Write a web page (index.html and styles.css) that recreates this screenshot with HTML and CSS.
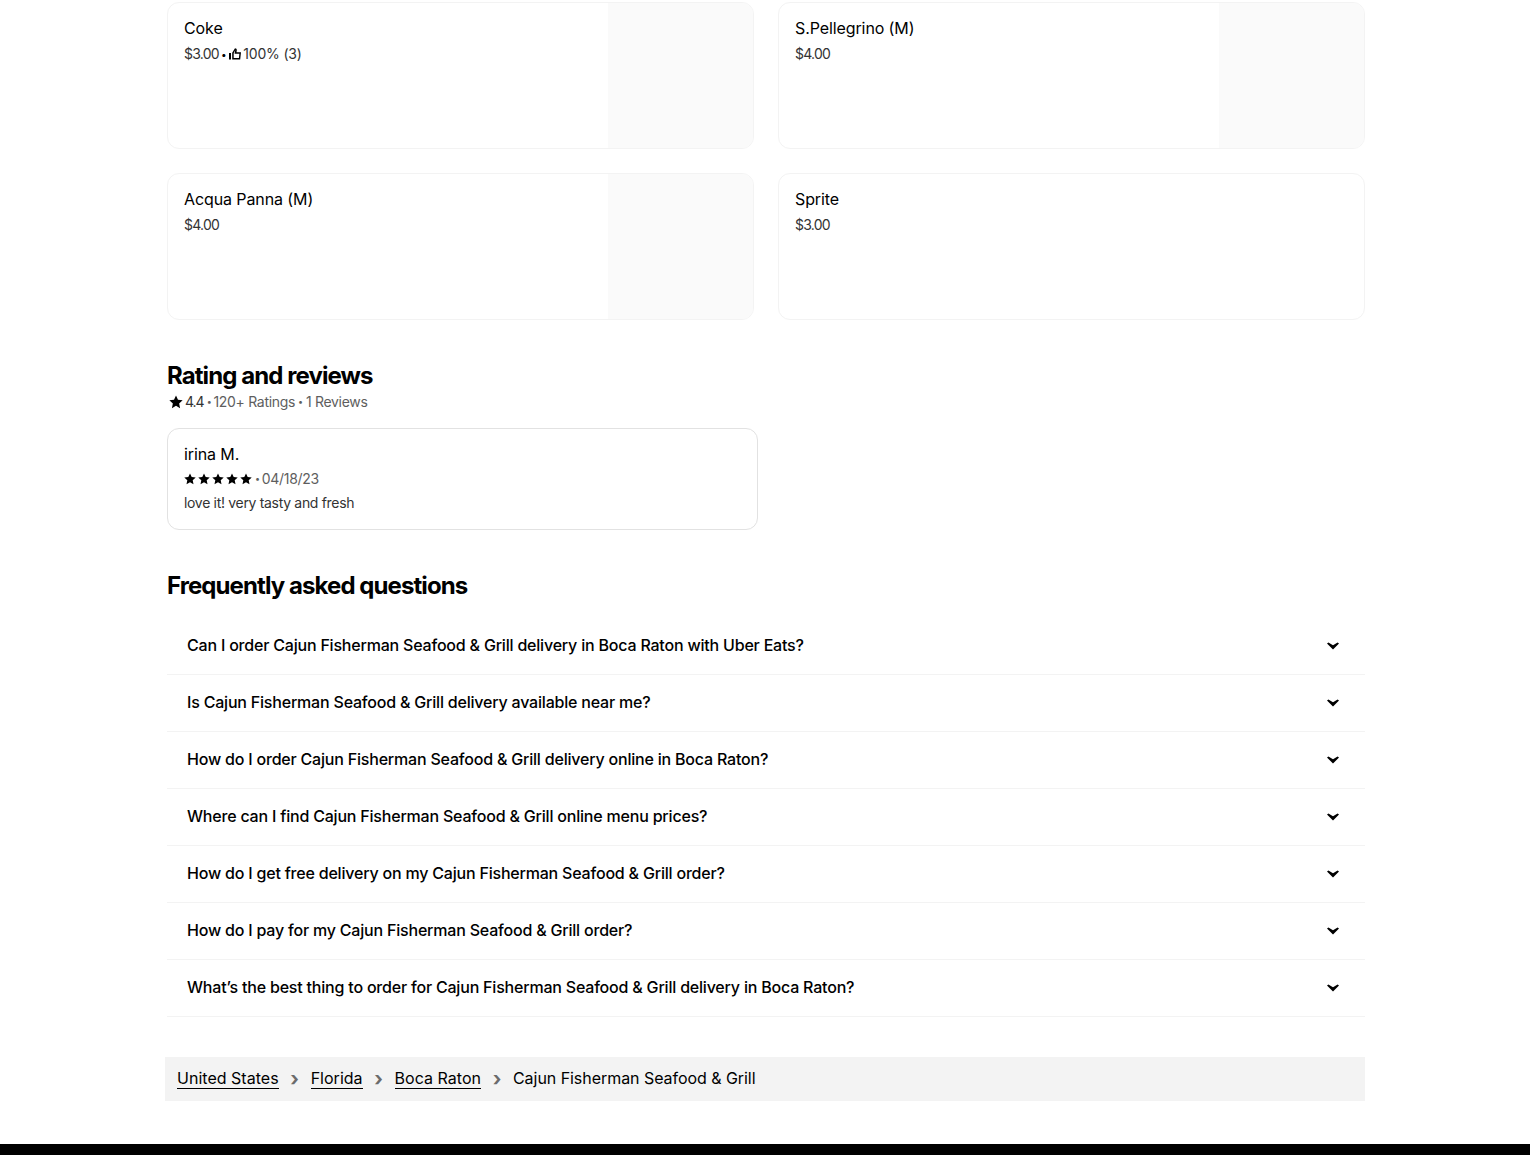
FILE: index.html
```html
<!DOCTYPE html>
<html lang="en">
<head>
<meta charset="utf-8">
<title>Cajun Fisherman Seafood &amp; Grill</title>
<link rel="stylesheet" href="styles.css">
</head>
<body>
<main class="page">
  <section class="items">
    <article class="item">
      <div class="item-text">
        <div class="item-name">Coke</div>
        <div class="item-meta"><span class="price">$3.00</span><span class="bullet">•</span><svg class="thumb" viewBox="0 0 12 12" width="12" height="12"><path d="M0 5h2v6.5H0zM3.2 11.5V4.8L6 .2c1.2 0 2 .8 1.8 2L7.5 4.2H12l-.8 7.3zM4.7 10h5.2l.5-4.3H5.6l.7-3.6L4.7 5.2z" fill="#000" fill-rule="evenodd"/></svg><span class="rating-text">100% (3)</span></div>
      </div>
      <div class="item-photo"></div>
    </article>
    <article class="item">
      <div class="item-text">
        <div class="item-name">S.Pellegrino (M)</div>
        <div class="item-meta"><span class="price">$4.00</span></div>
      </div>
      <div class="item-photo"></div>
    </article>
    <article class="item">
      <div class="item-text">
        <div class="item-name">Acqua Panna (M)</div>
        <div class="item-meta"><span class="price">$4.00</span></div>
      </div>
      <div class="item-photo"></div>
    </article>
    <article class="item">
      <div class="item-text">
        <div class="item-name">Sprite</div>
        <div class="item-meta"><span class="price">$3.00</span></div>
      </div>
    </article>
  </section>

  <section class="reviews">
    <h2 class="heading">Rating and reviews</h2>
    <div class="summary">
      <svg class="star" viewBox="0 0 12 12" width="14" height="14"><path d="M6 .4l1.7 3.7 4 .5-3 2.7.8 4L6 9.3l-3.5 2 .8-4-3-2.7 4-.5z" fill="#000"/></svg>
      <span class="score">4.4</span><span class="dot dot-score">•</span><span>120+ Ratings</span><span class="dot">•</span><span>1 Reviews</span>
    </div>
    <article class="review">
      <div class="review-name">irina M.</div>
      <div class="review-meta">
        <span class="stars">
          <svg class="star-sm" viewBox="0 0 12 12" width="12" height="12"><path d="M6 .4l1.7 3.7 4 .5-3 2.7.8 4L6 9.3l-3.5 2 .8-4-3-2.7 4-.5z" fill="#000"/></svg>
          <svg class="star-sm" viewBox="0 0 12 12" width="12" height="12"><path d="M6 .4l1.7 3.7 4 .5-3 2.7.8 4L6 9.3l-3.5 2 .8-4-3-2.7 4-.5z" fill="#000"/></svg>
          <svg class="star-sm" viewBox="0 0 12 12" width="12" height="12"><path d="M6 .4l1.7 3.7 4 .5-3 2.7.8 4L6 9.3l-3.5 2 .8-4-3-2.7 4-.5z" fill="#000"/></svg>
          <svg class="star-sm" viewBox="0 0 12 12" width="12" height="12"><path d="M6 .4l1.7 3.7 4 .5-3 2.7.8 4L6 9.3l-3.5 2 .8-4-3-2.7 4-.5z" fill="#000"/></svg>
          <svg class="star-sm" viewBox="0 0 12 12" width="12" height="12"><path d="M6 .4l1.7 3.7 4 .5-3 2.7.8 4L6 9.3l-3.5 2 .8-4-3-2.7 4-.5z" fill="#000"/></svg>
        </span>
        <span class="dot dot-tight">•</span><span>04/18/23</span>
      </div>
      <div class="review-body">love it! very tasty and fresh</div>
    </article>
  </section>

  <section class="faq">
    <h2 class="heading">Frequently asked questions</h2>
    <ul class="faq-list">
      <li class="faq-row"><span>Can I order Cajun Fisherman Seafood &amp; Grill delivery in Boca Raton with Uber Eats?</span><svg class="chev" viewBox="0 0 12 8" width="12" height="8"><path d="M0 1.6L1.4 .4 6 3.2 10.6 .4 12 1.6 6 7.4z" fill="#000"/></svg></li>
      <li class="faq-row"><span>Is Cajun Fisherman Seafood &amp; Grill delivery available near me?</span><svg class="chev" viewBox="0 0 12 8" width="12" height="8"><path d="M0 1.6L1.4 .4 6 3.2 10.6 .4 12 1.6 6 7.4z" fill="#000"/></svg></li>
      <li class="faq-row"><span>How do I order Cajun Fisherman Seafood &amp; Grill delivery online in Boca Raton?</span><svg class="chev" viewBox="0 0 12 8" width="12" height="8"><path d="M0 1.6L1.4 .4 6 3.2 10.6 .4 12 1.6 6 7.4z" fill="#000"/></svg></li>
      <li class="faq-row"><span>Where can I find Cajun Fisherman Seafood &amp; Grill online menu prices?</span><svg class="chev" viewBox="0 0 12 8" width="12" height="8"><path d="M0 1.6L1.4 .4 6 3.2 10.6 .4 12 1.6 6 7.4z" fill="#000"/></svg></li>
      <li class="faq-row"><span>How do I get free delivery on my Cajun Fisherman Seafood &amp; Grill order?</span><svg class="chev" viewBox="0 0 12 8" width="12" height="8"><path d="M0 1.6L1.4 .4 6 3.2 10.6 .4 12 1.6 6 7.4z" fill="#000"/></svg></li>
      <li class="faq-row"><span>How do I pay for my Cajun Fisherman Seafood &amp; Grill order?</span><svg class="chev" viewBox="0 0 12 8" width="12" height="8"><path d="M0 1.6L1.4 .4 6 3.2 10.6 .4 12 1.6 6 7.4z" fill="#000"/></svg></li>
      <li class="faq-row"><span>What’s the best thing to order for Cajun Fisherman Seafood &amp; Grill delivery in Boca Raton?</span><svg class="chev" viewBox="0 0 12 8" width="12" height="8"><path d="M0 1.6L1.4 .4 6 3.2 10.6 .4 12 1.6 6 7.4z" fill="#000"/></svg></li>
    </ul>
  </section>

  <nav class="crumbs">
    <a class="crumb" href="#">United States</a><span class="sep">›</span>
    <a class="crumb" href="#">Florida</a><span class="sep">›</span>
    <a class="crumb" href="#">Boca Raton</a><span class="sep">›</span>
    <span class="crumb-current">Cajun Fisherman Seafood &amp; Grill</span>
  </nav>
</main>
<footer class="footer"></footer>
</body>
</html>
```
FILE: styles.css
```css
* { box-sizing: border-box; }
html, body { margin: 0; padding: 0; height: 1155px; overflow: hidden; background: #fff; }
body { font-family: "Inter", "Liberation Sans", sans-serif; color: #000; }
.page { width: 1200px; margin-left: 165px; padding-top: 2px; height: 1142px; }

.items { display: grid; grid-template-columns: 587px 587px; column-gap: 24px; row-gap: 24px; padding-left: 2px; }
.item { height: 147px; display: flex; border: 1px solid #f3f3f3; border-radius: 12px; overflow: hidden; }
.item-text { flex: 1; padding: 15px 16px; }
.item-photo { width: 145px; background: #fafafa; }
.item-name { font-size: 16px; line-height: 20px; font-weight: 400; letter-spacing: -0.1px; }
.item-meta { display: flex; align-items: center; font-size: 14px; line-height: 20px; margin-top: 6px; color: #333; letter-spacing: -0.2px; height: 20px; }
.price { letter-spacing: -0.75px; }
.bullet { margin: 0 3px 0 2px; font-size: 10px; color: #000; }
.thumb { margin-right: 2px; }

.reviews { padding-left: 2px; margin-top: 38px; }
.heading { margin: 0; font-size: 24px; line-height: 36px; font-weight: 700; letter-spacing: -0.92px; }
.summary { display: flex; align-items: center; font-size: 14px; line-height: 18px; height: 16px; color: #5e5e5e; letter-spacing: -0.3px; padding-left: 2px; }
.star { margin-right: 2px; }
.score { color: #333; letter-spacing: -1px; }
.dot { margin: 0 3px; font-size: 9px; }
.dot-score { margin: 0 2px 0 3px; }
.dot-tight { margin: 0 2px 0 3px; }
.review { width: 591px; height: 102px; margin-top: 18px; border: 1px solid #e2e2e2; border-radius: 12px; padding: 15px 16px; }
.review-name { font-size: 16px; line-height: 20px; letter-spacing: -0.1px; }
.review-meta { display: flex; align-items: center; font-size: 14px; line-height: 20px; color: #5e5e5e; letter-spacing: -0.3px; margin-top: 5px; }
.stars { display: flex; gap: 2px; }
.review-body { font-size: 14px; line-height: 20px; color: #333; letter-spacing: -0.32px; margin-top: 4px; }

.faq { padding-left: 2px; margin-top: 38px; }
.faq-list { list-style: none; margin: 14px 0 0; padding: 0; }
.faq-row { height: 57px; display: flex; align-items: center; justify-content: space-between; padding: 0 26px 2px 20px; font-size: 16px; font-weight: 500; letter-spacing: -0.2px; border-bottom: 1px solid #f3f3f3; }
.chev { margin-top: 2px; }

.crumbs { display: flex; align-items: center; height: 44px; margin-top: 40px; padding-left: 12px; background: #f3f3f3; font-size: 16px; letter-spacing: 0.02px; }
.crumb { color: #000; text-decoration: none; border-bottom: 1px solid #000; line-height: 19px; }
.crumb-current { line-height: 19px; padding-bottom: 1px; letter-spacing: -0.05px; }
.sep { width: 32px; text-align: center; color: #6b6b6b; font-size: 20px; font-weight: 700; }
.footer { height: 11px; background: #000; margin-top: 2px; }
```
